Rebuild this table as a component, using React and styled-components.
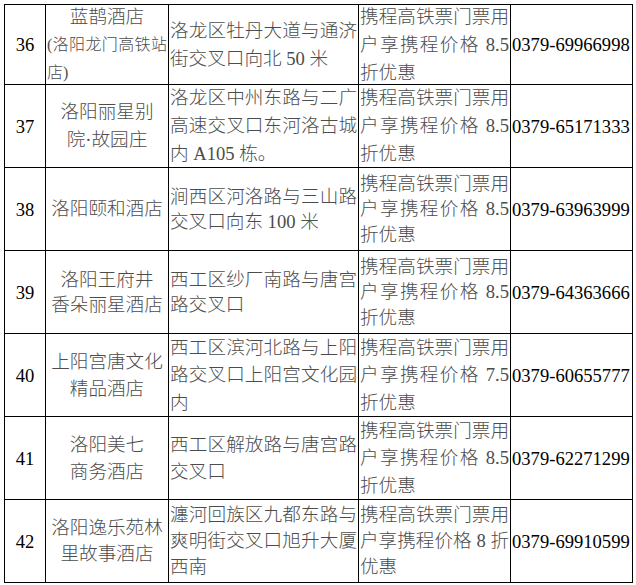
import React from 'react'
import styled, { createGlobalStyle } from 'styled-components'

const GlobalStyle = createGlobalStyle`
    body{
        margin:0;
        background:#fff;
    }
`

const rows = [
    {
        no: '36',
        name: ['蓝鹊酒店'],
        sub: ['(洛阳龙门高铁站', '店)'],
        addr: ['洛龙区牡丹大道与通济', '街交叉口向北 50 米'],
        deal: ['携程高铁票门票用', '户享携程价格 8.5', '折优惠'],
        tel: '0379-69966998',
        lh: 28,
    },
    {
        no: '37',
        name: ['洛阳丽星别', '院·故园庄'],
        addr: ['洛龙区中州东路与二广', '高速交叉口东河洛古城', '内 A105 栋。'],
        deal: ['携程高铁票门票用', '户享携程价格 8.5', '折优惠'],
        tel: '0379-65171333',
        lh: 28,
    },
    {
        no: '38',
        name: ['洛阳颐和酒店'],
        addr: ['涧西区河洛路与三山路', '交叉口向东 100 米'],
        deal: ['携程高铁票门票用', '户享携程价格 8.5', '折优惠'],
        tel: '0379-63963999',
        lh: 25.5,
    },
    {
        no: '39',
        name: ['洛阳王府井', '香朵丽星酒店'],
        addr: ['西工区纱厂南路与唐宫', '路交叉口'],
        deal: ['携程高铁票门票用', '户享携程价格 8.5', '折优惠'],
        tel: '0379-64363666',
        lh: 25.5,
    },
    {
        no: '40',
        name: ['上阳宫唐文化', '精品酒店'],
        addr: ['西工区滨河北路与上阳', '路交叉口上阳宫文化园', '内'],
        deal: ['携程高铁票门票用', '户享携程价格 7.5', '折优惠'],
        tel: '0379-60655777',
        lh: 27.5,
    },
    {
        no: '41',
        name: ['洛阳美七', '商务酒店'],
        addr: ['西工区解放路与唐宫路', '交叉口'],
        deal: ['携程高铁票门票用', '户享携程价格 8.5', '折优惠'],
        tel: '0379-62271299',
        lh: 27.5,
    },
    {
        no: '42',
        name: ['洛阳逸乐苑林', '里故事酒店'],
        addr: ['瀍河回族区九都东路与', '爽明街交叉口旭升大厦', '西南'],
        deal: ['携程高铁票门票用', '户享携程价格 8 折', '优惠'],
        tel: '0379-69910599',
        lh: 26,
    },
]

const Lines = ({ lines, small }) => (
    lines.map((line, i) => (
        <Line key={i} $justify={i < lines.length - 1} $small={small}>{line}</Line>
    ))
)

const App = () => {
    return (
        <>
            <GlobalStyle />
            <Table lang="zh-CN">
                {rows.map(row => (
                    <React.Fragment key={row.no}>
                        <NumCell>{row.no}</NumCell>
                        <NameCell $lh={row.lh}>
                            {row.name.map((n, i) => <div key={i}>{n}</div>)}
                            {row.sub && <SubName><Lines lines={row.sub} small /></SubName>}
                        </NameCell>
                        <TextCell $lh={row.lh}><Lines lines={row.addr} /></TextCell>
                        <TextCell $lh={row.lh}><Lines lines={row.deal} /></TextCell>
                        <TelCell>{row.tel}</TelCell>
                    </React.Fragment>
                ))}
            </Table>
        </>
    )
}

export default App

const Table = styled.div`
    display:grid;
    grid-template-columns:40px 122px 189px 151px 121px;
    grid-template-rows:79px repeat(6, 82px);
    gap:1px;
    width:max-content;
    margin:4px 0 0 4px;
    background:#000;
    border:1px solid #000;
`

const Cell = styled.div`
    background:#fff;
    display:flex;
    flex-direction:column;
    justify-content:center;
    overflow:visible;
    white-space:nowrap;
    font-family:"Liberation Serif", "Noto Sans CJK SC", serif;
    font-size:18.6px;
    font-weight:300;
    color:#4c4c4c;
    line-height:${p => p.$lh || 27}px;
`

const NumCell = styled(Cell)`
    align-items:center;
    color:#000;
    font-weight:400;
`

const NameCell = styled(Cell)`
    align-items:center;
    text-align:center;
    padding:0 1px;
`

const SubName = styled.div`
    align-self:stretch;
    text-align:left;
`

const TextCell = styled(Cell)`
    padding:0 1px;
`

const Line = styled.div`
    font-size:${p => p.$small ? '16px' : 'inherit'};
    text-align:${p => p.$justify ? 'justify' : 'left'};
    text-align-last:${p => p.$justify ? 'justify' : 'left'};
    white-space:${p => p.$justify ? 'normal' : 'nowrap'};
`

const TelCell = styled(Cell)`
    padding-left:1px;
    color:#000;
    font-weight:400;
`
